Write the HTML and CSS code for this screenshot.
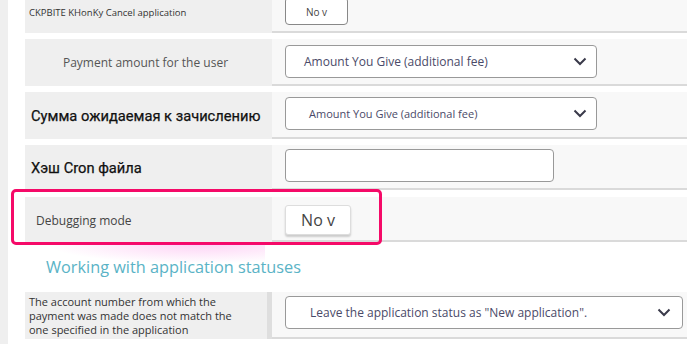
FILE: index.html
```html
<!doctype html>
<html>
<head>
    <meta charset="utf-8">
    <title>Settings</title>
    <link rel="stylesheet" href="styles.css">
</head>
<body>
<div class="gutter"></div>
<div class="settings">

    <div class="row row-first">
        <div class="label label-small">CKPBITE KHonKy Cancel application</div>
        <div class="value">
            <div class="toggle toggle-small">No v</div>
        </div>
    </div>

    <div class="row">
        <div class="label label-center">Payment amount for the user</div>
        <div class="value">
            <div class="select">
                <span>Amount You Give (additional fee)</span>
                <svg class="chevron" width="14" height="9" viewBox="0 0 14 9"><path d="M1.5 1.5 L7 7 L12.5 1.5" fill="none" stroke="#3a3a4a" stroke-width="2"/></svg>
            </div>
        </div>
    </div>

    <div class="row">
        <div class="label label-ru">Сумма ожидаемая к зачислению</div>
        <div class="value">
            <div class="select select-sm">
                <span>Amount You Give (additional fee)</span>
                <svg class="chevron" width="14" height="9" viewBox="0 0 14 9"><path d="M1.5 1.5 L7 7 L12.5 1.5" fill="none" stroke="#3a3a4a" stroke-width="2"/></svg>
            </div>
        </div>
    </div>

    <div class="row row-short">
        <div class="label label-ru">Хэш Cron файла</div>
        <div class="value">
            <div class="text-input"></div>
        </div>
    </div>

    <div class="row row-debug">
        <div class="label label-debug">Debugging mode</div>
        <div class="value">
            <div class="toggle toggle-big">No v</div>
        </div>
        <div class="highlight"></div>
        <div class="glow"></div>
    </div>

    <h3 class="section-title">Working with application statuses</h3>

    <div class="row">
        <div class="label label-multi"><span>The account number from which the payment was made does not match the one specified in the application</span></div>
        <div class="value">
            <div class="select select-wide">
                <span>Leave the application status as "New application".</span>
                <svg class="chevron" width="14" height="9" viewBox="0 0 14 9"><path d="M1.5 1.5 L7 7 L12.5 1.5" fill="none" stroke="#3a3a4a" stroke-width="2"/></svg>
            </div>
        </div>
    </div>

    <div class="row"></div>

</div>
</body>
</html>
```

FILE: styles.css
```css
body {
    margin: 0;
    padding: 0;
    display: flex;
    background: #fff;
    font-family: "Open Sans", Arial, sans-serif;
    color: #444;
    overflow: hidden;
    height: 344px;
}

.gutter {
    width: 8px;
    background: #efefef;
    flex-shrink: 0;
}

.settings {
    flex: 1;
    padding-left: 17px;
    margin-top: -14px;
}

.row {
    display: grid;
    grid-template-columns: 247px 1fr;
    height: 47px;
    margin-bottom: 6px;
    position: relative;
}

.row-short {
    height: 45px;
    margin-bottom: 7px;
}

.row-debug {
    height: 45px;
    margin-top: 1px;
    margin-bottom: 0;
}

.label {
    background: #efefef;
    display: flex;
    align-items: center;
    padding-left: 6px;
}

.label-small {
    font-size: 9.5px;
    padding-left: 4px;
    color: #333;
}

.row-first .label {
    padding-top: 6px;
}

.label-center {
    justify-content: center;
    padding-left: 0;
    padding-right: 6px;
    font-size: 12px;
    color: #555;
}

.label-ru {
    font-family: Roboto, "Noto Sans", sans-serif;
    font-weight: 400;
    font-size: 14.7px;
    color: #111;
    -webkit-text-stroke: 0.25px #111;
}

.label-debug {
    padding-left: 11px;
    font-size: 12px;
    color: #444;
    padding-top: 2px;
}

.label-multi {
    border-right: 5px solid #dedede;
    padding-left: 4px;
    padding-top: 1px;
    font-size: 11px;
    line-height: 14px;
    color: #333;
}

.label-multi span {
    max-width: 208px;
}

.value {
    background: #f8f8f8;
    border-bottom: 2px solid #dadada;
    display: flex;
    align-items: center;
    padding-left: 13px;
}

.toggle {
    background: #fff;
    color: #444;
    display: flex;
    justify-content: center;
}

.toggle-small {
    width: 63px;
    height: 28px;
    border: 1px solid #888;
    border-radius: 4px;
    font-size: 10px;
    padding-top: 7px;
    box-sizing: border-box;
    align-items: flex-start;
    margin-top: 4px;
}

.toggle-big {
    width: 66px;
    height: 30px;
    border: 1px solid #ddd;
    border-radius: 3px;
    box-shadow: 0 2px 2px rgba(0, 0, 0, 0.18);
    font-size: 16px;
    align-items: center;
    box-sizing: border-box;
    margin-top: 2px;
}

.select {
    width: 312px;
    height: 33px;
    box-sizing: border-box;
    background: #fff;
    border: 1px solid #999;
    border-radius: 4px;
    display: flex;
    align-items: center;
    justify-content: space-between;
    padding: 0 9px 0 18px;
    font-size: 12px;
    color: #4a4a68;
    margin-top: 0;
}

.select-sm {
    font-size: 11px;
    padding-left: 23px;
    margin-top: -2px;
}

.select-wide {
    width: 398px;
    padding-left: 24px;
    padding-right: 11px;
    margin-top: -5px;
}

.text-input {
    width: 269px;
    height: 33px;
    box-sizing: border-box;
    background: #fff;
    border: 1px solid #999;
    border-radius: 4px;
    margin-top: -3px;
}

.highlight {
    position: absolute;
    left: -14px;
    top: -8px;
    width: 371px;
    height: 56px;
    border: 3px solid #f50a68;
    border-radius: 5px;
    box-sizing: border-box;
    pointer-events: none;
}

.glow {
    position: absolute;
    left: 20px;
    top: 47px;
    width: 220px;
    height: 20px;
    background: radial-gradient(ellipse at 70% 0%, rgba(245, 10, 200, 0.18), rgba(245, 10, 200, 0) 70%);
    pointer-events: none;
}

.section-title {
    margin: 0;
    height: 50px;
    display: flex;
    align-items: center;
    padding-left: 21px;
    font-weight: 400;
    font-size: 16.3px;
    color: #5ab3c6;
}
```
